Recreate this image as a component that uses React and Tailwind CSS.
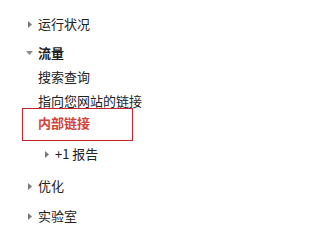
import React from "react";

const Right = ({ className = "" }) => (
  <svg width="4" height="7" viewBox="0 0 4 7" className={className}>
    <path d="M0 0 L4 3.5 L0 7 Z" fill="#7a7a7a" />
  </svg>
);

const Down = () => (
  <svg width="7" height="4" viewBox="0 0 7 4">
    <path d="M0 0 L7 0 L3.5 4 Z" fill="#8a8a8a" />
  </svg>
);

export default function App() {
  return (
    <div
      className="w-[214px] h-[243px] bg-white text-[13px] text-[#222]"
      style={{ fontFamily: '"Noto Sans CJK SC", "Noto Sans", sans-serif' }}
    >
      <div className="pt-[12px]">
        <div className="flex items-center h-[24px] pl-[28px]">
          <Right />
          <span className="ml-[6px]">运行状况</span>
        </div>
        <div className="flex items-center h-[24px] mt-[5px] pl-[26px]">
          <Down />
          <span className="ml-[5px] font-bold">流量</span>
        </div>
        <div className="h-[24px] leading-[24px] pl-[38px]">搜索查询</div>
        <div className="h-[19px] leading-[24px] pl-[38px] whitespace-nowrap">指向您网站的链接</div>
        <div className="ml-[22px] w-[111px] h-[33px] border border-[#c1272d] flex items-center pl-[15px] pb-[3px]">
          <span className="font-bold text-[#d2433a]">内部链接</span>
        </div>
        <div className="flex items-center h-[26px] pl-[45px]">
          <Right />
          <span className="ml-[6px]">+1 报告</span>
        </div>
        <div className="flex items-center h-[24px] mt-[7px] pl-[28px]">
          <Right />
          <span className="ml-[6px]">优化</span>
        </div>
        <div className="flex items-center h-[24px] mt-[6px] pl-[28px]">
          <Right />
          <span className="ml-[6px]">实验室</span>
        </div>
      </div>
    </div>
  );
}
